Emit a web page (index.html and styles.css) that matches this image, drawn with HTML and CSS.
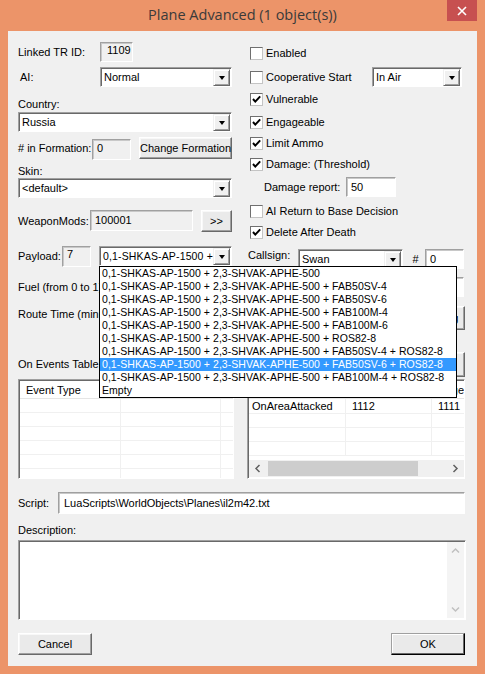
FILE: index.html
```html
<!DOCTYPE html>
<html>
<head>
<meta charset="utf-8">
<title>Plane Advanced</title>
<link rel="stylesheet" href="styles.css">
</head>
<body>
<div class="window">
  <div class="titlebar">
    <div class="title">Plane Advanced (1 object(s))</div>
    <div class="close"><svg width="10" height="10" viewBox="0 0 10 10"><path d="M1 1 L9 9 M9 1 L1 9" stroke="#fff" stroke-width="1.6" fill="none"/></svg></div>
  </div>
  <div class="client">
    <div class="top">
      <div class="col-left">
        <div class="row r1"><span class="lbl lbl-linked">Linked TR ID:</span><div class="ro box-linked">1109</div></div>
        <div class="row r2"><span class="lbl lbl-ai">AI:</span><div class="sel sel-ai"><span class="sel-text">Normal</span><span class="sel-btn"><span class="tri"></span></span></div></div>
        <div class="lbl-line r3">Country:</div>
        <div class="sel sel-full r3b"><span class="sel-text">Russia</span><span class="sel-btn"><span class="tri"></span></span></div>
        <div class="row r4"><span class="lbl lbl-form"># in Formation:</span><div class="ro box-form">0</div><div class="btn btn-form">Change Formation</div></div>
        <div class="lbl-line r5">Skin:</div>
        <div class="sel sel-full"><span class="sel-text">&lt;default&gt;</span><span class="sel-btn"><span class="tri"></span></span></div>
        <div class="row r6"><span class="lbl lbl-wm">WeaponMods:</span><div class="ro box-wm">100001</div><div class="btn btn-wm">&gt;&gt;</div></div>
        <div class="row r7"><span class="lbl lbl-pl">Payload:</span><div class="ro box-pl">7</div><div class="sel sel-pl"><span class="sel-text sel-wide">0,1-SHKAS-AP-1500 + 2,3-SHVAK-APHE-500</span><span class="sel-btn"><span class="tri"></span></span></div></div>
      </div>
      <div class="col-right">
        <div class="crow c1"><span class="cb"></span><span class="clbl">Enabled</span></div>
        <div class="crow c2"><span class="cb"></span><span class="clbl clbl-coop">Cooperative Start</span><div class="sel sel-air"><span class="sel-text">In Air</span><span class="sel-btn"><span class="tri"></span></span></div></div>
        <div class="crow c3"><span class="cb on"><svg width="11" height="11" viewBox="0 0 11 11"><path d="M2 5 L4.3 7.6 L9.2 2.4" stroke="#000" stroke-width="2" fill="none"/></svg></span><span class="clbl">Vulnerable</span></div>
        <div class="crow c4"><span class="cb on"><svg width="11" height="11" viewBox="0 0 11 11"><path d="M2 5 L4.3 7.6 L9.2 2.4" stroke="#000" stroke-width="2" fill="none"/></svg></span><span class="clbl">Engageable</span></div>
        <div class="crow c5"><span class="cb on"><svg width="11" height="11" viewBox="0 0 11 11"><path d="M2 5 L4.3 7.6 L9.2 2.4" stroke="#000" stroke-width="2" fill="none"/></svg></span><span class="clbl">Limit Ammo</span></div>
        <div class="crow c6"><span class="cb on"><svg width="11" height="11" viewBox="0 0 11 11"><path d="M2 5 L4.3 7.6 L9.2 2.4" stroke="#000" stroke-width="2" fill="none"/></svg></span><span class="clbl">Damage: (Threshold)</span></div>
        <div class="crow c7"><span class="lbl lbl-dr">Damage report:</span><div class="ed box-dr">50</div></div>
        <div class="crow c8"><span class="cb"></span><span class="clbl">AI Return to Base Decision</span></div>
        <div class="crow c9"><span class="cb on"><svg width="11" height="11" viewBox="0 0 11 11"><path d="M2 5 L4.3 7.6 L9.2 2.4" stroke="#000" stroke-width="2" fill="none"/></svg></span><span class="clbl">Delete After Death</span></div>
        <div class="crow c10"><span class="lbl lbl-cs">Callsign:</span><div class="sel sel-cs"><span class="sel-text">Swan</span><span class="sel-btn"><span class="tri"></span></span></div><span class="hash">#</span><div class="ed box-cs">0</div></div>
      </div>
    </div>

    <div class="mrow m1"><span class="lbl">Fuel (from 0 to 1):</span><div class="ed box-fuel">1</div></div>
    <div class="mrow m2"><span class="lbl lbl-route">Route Time (minutes):</span><div class="btn btn-route">Set Timing</div></div>
    <div class="mrow m3"><span class="lbl">On Events Table:</span><div class="btn btn-events">Edit</div></div>

    <div class="tables">
      <div class="tbl tbl-left">
        <div class="thead"><span class="th c-a">Event Type</span><span class="th c-b">Target</span><span class="th c-c"></span></div>
        <div class="tr"><span class="td c-a"></span><span class="td c-b"></span><span class="td c-c"></span></div>
        <div class="tr"><span class="td c-a"></span><span class="td c-b"></span><span class="td c-c"></span></div>
        <div class="tr"><span class="td c-a"></span><span class="td c-b"></span><span class="td c-c"></span></div>
        <div class="tr"><span class="td c-a"></span><span class="td c-b"></span><span class="td c-c"></span></div>
        <div class="tr"><span class="td c-a"></span><span class="td c-b"></span><span class="td c-c"></span></div>
        <div class="tr"><span class="td c-a"></span><span class="td c-b"></span><span class="td c-c"></span></div>
      </div>
      <div class="tbl tbl-right">
        <div class="tbody-r">
          <div class="thead"><span class="th r-a">Event Type</span><span class="th r-b">Target</span><span class="th r-c"><span>Message</span></span></div>
          <div class="tr"><span class="td r-a">OnAreaAttacked</span><span class="td r-b">1112</span><span class="td r-c">1111</span></div>
          <div class="tr"><span class="td r-a"></span><span class="td r-b"></span><span class="td r-c"></span></div>
          <div class="tr"><span class="td r-a"></span><span class="td r-b"></span><span class="td r-c"></span></div>
          <div class="tr"><span class="td r-a"></span><span class="td r-b"></span><span class="td r-c"></span></div>
        </div>
        <div class="hscroll">
          <span class="sarrow"><svg width="7" height="9" viewBox="0 0 7 9"><path d="M5.5 1 L2 4.5 L5.5 8" stroke="#606060" stroke-width="1.5" fill="none"/></svg></span>
          <span class="strack"><span class="sthumb"></span></span>
          <span class="sarrow"><svg width="7" height="9" viewBox="0 0 7 9"><path d="M1.5 1 L5 4.5 L1.5 8" stroke="#606060" stroke-width="1.5" fill="none"/></svg></span>
        </div>
      </div>
    </div>

    <div class="srow"><span class="lbl">Script:</span><div class="ed box-script">LuaScripts\WorldObjects\Planes\il2m42.txt</div></div>
    <div class="lbl-line dlbl">Description:</div>
    <div class="desc">
      <div class="desc-area"></div>
      <div class="vscroll">
        <svg width="9" height="7" viewBox="0 0 9 7"><path d="M1 5.5 L4.5 2 L8 5.5" stroke="#c0c0c0" stroke-width="1.5" fill="none"/></svg>
        <svg width="9" height="7" viewBox="0 0 9 7"><path d="M1 1.5 L4.5 5 L8 1.5" stroke="#c0c0c0" stroke-width="1.5" fill="none"/></svg>
      </div>
    </div>
    <div class="brow"><div class="btn btn-cancel">Cancel</div><div class="btn btn-ok">OK</div></div>

    <div class="droplist">
      <div class="opt">0,1-SHKAS-AP-1500 + 2,3-SHVAK-APHE-500</div>
      <div class="opt">0,1-SHKAS-AP-1500 + 2,3-SHVAK-APHE-500 + FAB50SV-4</div>
      <div class="opt">0,1-SHKAS-AP-1500 + 2,3-SHVAK-APHE-500 + FAB50SV-6</div>
      <div class="opt">0,1-SHKAS-AP-1500 + 2,3-SHVAK-APHE-500 + FAB100M-4</div>
      <div class="opt">0,1-SHKAS-AP-1500 + 2,3-SHVAK-APHE-500 + FAB100M-6</div>
      <div class="opt">0,1-SHKAS-AP-1500 + 2,3-SHVAK-APHE-500 + ROS82-8</div>
      <div class="opt">0,1-SHKAS-AP-1500 + 2,3-SHVAK-APHE-500 + FAB50SV-4 + ROS82-8</div>
      <div class="opt sel-opt">0,1-SHKAS-AP-1500 + 2,3-SHVAK-APHE-500 + FAB50SV-6 + ROS82-8</div>
      <div class="opt">0,1-SHKAS-AP-1500 + 2,3-SHVAK-APHE-500 + FAB100M-4 + ROS82-8</div>
      <div class="opt">Empty</div>
    </div>
  </div>
</div>
</body>
</html>
```

FILE: styles.css
```css
* { box-sizing: border-box; }
html, body { margin: 0; padding: 0; }
body {
  width: 485px; height: 674px; overflow: hidden;
  background: #ec9469;
  font-family: "Liberation Sans", Arial, sans-serif;
  font-size: 11px; color: #000;
}
.window { width: 485px; height: 674px; display: flex; flex-direction: column; }
.titlebar { height: 31px; display: flex; padding: 0 8px 0 38px; }
.title {
  flex: 1; text-align: center; padding-top: 5px;
  font-family: "Open Sans", "Noto Sans", sans-serif; font-size: 14.5px; color: #3a3a3a;
}
.close {
  width: 30px; height: 21px; background: #c75050;
  display: flex; align-items: center; justify-content: center;
}
.client {
  position: relative;
  margin: 0 8px 8px; height: 635px;
  background: #f0f0f0;
  padding: 11px 12px 0 10px;
  display: flex; flex-direction: column;
}

/* common controls */
.lbl { white-space: nowrap; line-height: 13px; }
.lbl-line { line-height: 13px; height: 13px; }
.row { display: flex; align-items: center; }
.ro, .ed {
  border: 1px solid; border-color: #a0a0a0 #fff #fff #a0a0a0;
  box-shadow: inset 1px 1px 0 #c8c8c8;
  padding: 2px 0 0 4px; white-space: nowrap; overflow: hidden;
}
.ro { background: #f0f0f0; }
.ed { background: #fff; padding-top: 3px; }
.btn {
  background: #eaeaea;
  border: 1px solid; border-color: #fff #696969 #696969 #fff;
  box-shadow: inset -1px -1px 0 #a0a0a0, inset 1px 1px 0 #f8f8f8;
  display: flex; align-items: center; justify-content: center; white-space: nowrap;
}
.sel {
  display: flex; height: 20px; background: #fff;
  border: 1px solid; border-color: #a0a0a0 #fff #fff #a0a0a0;
  box-shadow: inset 1px 1px 0 #696969;
}
.sel-text { flex: 1; min-width: 0; padding: 3px 0 0 3px; white-space: nowrap; overflow: hidden; }
.sel-wide { font-size: 10.5px; letter-spacing: 0.15px; padding-top: 3px; }
.sel-btn {
  width: 17px; margin: 1px 1px 0 0; height: 17px; flex: none;
  background: #f0f0f0;
  border: 1px solid; border-color: #f0f0f0 #696969 #696969 #f0f0f0;
  box-shadow: inset 1px 1px 0 #fff, inset -1px -1px 0 #a0a0a0;
  display: flex; align-items: center; justify-content: center;
}
.tri { width: 0; height: 0; border-left: 3.5px solid transparent; border-right: 3.5px solid transparent; border-top: 4px solid #000; margin-top: 1px; }

/* top area */
.top { display: flex; }
.col-left { width: 214px; display: flex; flex-direction: column; }
.col-right { width: 217px; margin-left: 16px; display: flex; flex-direction: column; }

.r1 { height: 20px; }
.lbl-linked { width: 82px; }
.box-linked { width: 33px; height: 20px; padding: 1px 0 0 6px; }
.r2 { height: 20px; margin-top: 5px; }
.lbl-ai { width: 82px; padding-left: 2px; }
.sel-ai { width: 132px; }
.r3 { margin-top: 11px; }
.r3b { margin-top: 1px; }
.sel-full { width: 214px; }
.r4 { height: 23px; margin-top: 5px; }
.lbl-form { width: 74px; }
.box-form { width: 39px; height: 21px; align-self: flex-end; }
.btn-form { width: 93px; height: 22px; margin-left: 8px; align-self: flex-start; }
.r5 { margin-top: 5px; }
.r6 { height: 22px; margin-top: 12px; }
.lbl-wm { width: 72px; }
.box-wm { width: 103px; height: 21px; align-self: flex-start; padding-top: 3px; }
.btn-wm { width: 31px; height: 22px; margin-left: 8px; }
.r7 { height: 21px; margin-top: 14px; }
.lbl-pl { width: 44px; }
.box-pl { width: 29px; height: 21px; padding-top: 1px; }
.sel-pl { width: 133px; margin-left: 8px; align-self: flex-start; }

.crow { display: flex; align-items: center; height: 20px; }
.cb {
  width: 13px; height: 13px; margin-left: 2px; flex: none;
  background: #fff; border: 1px solid; border-color: #6f6f6f #c4c4c4 #c4c4c4 #6f6f6f;
  display: flex; align-items: center; justify-content: center;
}
.clbl { margin-left: 3px; white-space: nowrap; line-height: 13px; }
.clbl-coop { width: 106px; }
.c1 { margin-top: 1px; }
.c2 { margin-top: 4px; }
.sel-air { width: 90px; height: 20px; }
.c3 { margin-top: 2px; }
.c4 { margin-top: 3px; }
.c5 { margin-top: 1px; }
.c6 { margin-top: 1px; }
.c7 { margin-top: 3px; }
.lbl-dr { width: 98px; padding-left: 16px; }
.box-dr { width: 50px; height: 20px; }
.c8 { margin-top: 4px; }
.c9 { margin-top: 1px; }
.c10 { margin-top: 7px; }
.lbl-cs { width: 50px; align-self: flex-start; padding-top: 0px; }
.sel-cs { width: 105px; }
.hash { width: 22px; text-align: center; padding-left: 3px; }
.box-cs { width: 39px; height: 20px; }

/* middle rows */
.mrow { display: flex; align-items: center; justify-content: space-between; }
.m1 { height: 20px; margin-top: 8px; }
.box-fuel { width: 64px; height: 20px; margin-right: 1px; }
.m2 { height: 24px; margin-top: 9px; }
.lbl-route { align-self: flex-start; padding-top: 2px; }
.btn-route { width: 65px; height: 24px; }
.m3 { height: 25px; margin-top: 22px; }
.btn-events { width: 85px; height: 25px; }

/* tables */
.tables { display: flex; margin-top: 2px; height: 100px; }
.tbl {
  background: #fff; height: 100px; overflow: hidden;
  border: 1px solid; border-color: #a0a0a0 #fff #fff #a0a0a0;
  box-shadow: inset 1px 1px 0 #696969;
  padding: 1px 0 0 1px;
}
.tbl-left { width: 217px; }
.tbl-right { width: 219px; margin-left: 13px; display: flex; flex-direction: column; }
.tbody-r { flex: 1; overflow: hidden; }
.thead { display: flex; height: 18px; border-bottom: 1px solid #e5e5e5; }
.th { flex: none; padding: 3px 0 0 6px; white-space: nowrap; overflow: hidden; border-right: 1px solid #e5e5e5; }
.tr { display: flex; height: 14px; border-bottom: 1px solid #f0f0f0; }
.td { flex: none; padding: 1px 0 0 3px; white-space: nowrap; overflow: hidden; border-right: 1px solid #f0f0f0; }
.c-a { width: 101px; }
.c-b { width: 100px; }
.c-c { width: 20px; border-right: none; }
.r-a { width: 97px; }
.r-b { width: 86px; padding-left: 6px; }
.r-c { width: 40px; border-right: none; padding-left: 6px; }
.th.r-c { display: flex; justify-content: flex-end; padding: 3px 2px 0 0; width: 34px; }
.th.r-c span { flex: none; }
.tbody-r .tr:nth-child(2) { height: 15px; }
.tbody-r .tr .td { line-height: 13px; }
.hscroll { height: 17px; flex: none; display: flex; align-items: center; background: #f0f0f0; margin-bottom: 1px; }
.sarrow { width: 17px; height: 17px; display: flex; align-items: center; justify-content: center; flex: none; }
.strack { flex: 1; height: 15px; display: flex; align-items: center; }
.sthumb { margin-left: 2px; width: 150px; height: 15px; background: #cdcdcd; }

/* script & description */
.srow { display: flex; align-items: center; margin-top: 13px; height: 22px; }
.srow .lbl { width: 40px; }
.box-script { flex: 1; height: 22px; padding: 4px 0 0 5px; font-size: 11px; letter-spacing: -0.05px; }
.dlbl { margin-top: 10px; }
.desc {
  margin-top: 3px; height: 80px; width: 448px; display: flex;
  background: #fff;
  border: 1px solid; border-color: #a0a0a0 #fff #fff #a0a0a0;
  box-shadow: inset 1px 1px 0 #696969;
  padding: 1px 1px 1px 1px;
}
.desc-area { flex: 1; }
.vscroll {
  width: 17px; background: #f4f4f4;
  display: flex; flex-direction: column; justify-content: space-between; align-items: center;
  padding: 5px 0 5px;
}
.brow { display: flex; justify-content: space-between; margin-top: 13px; }
.btn-cancel { width: 74px; height: 22px; }
.btn-ok { width: 74px; height: 22px; border-color: #a0a0a0 #000 #000 #a0a0a0; box-shadow: inset -1px -1px 0 #696969, inset 1px 1px 0 #fff; }

/* open dropdown list */
.droplist {
  position: absolute; left: 91px; top: 235px;
  width: 358px; height: 132px;
  background: #fff; border: 1px solid #000;
  font-size: 10.5px; letter-spacing: 0.05px;
}
.opt { height: 13px; line-height: 13px; padding-left: 2px; white-space: nowrap; overflow: hidden; }
.sel-opt { background: #3399ff; color: #fff; }
```
